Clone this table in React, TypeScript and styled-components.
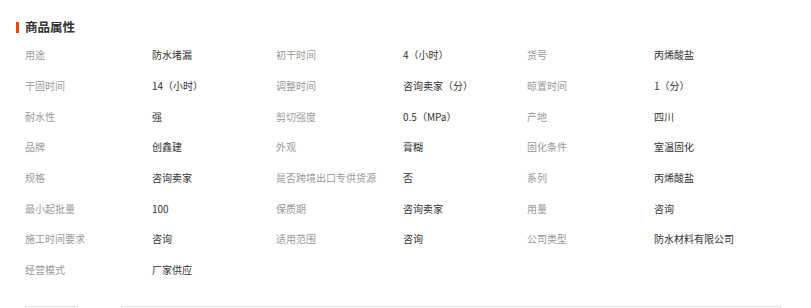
import React from "react";
import styled, { createGlobalStyle } from "styled-components";

const Global = createGlobalStyle`
  html, body { margin: 0; padding: 0; background: #fff; }
  body { font-family: "Noto Sans CJK SC", "Noto Sans", sans-serif; overflow: hidden; }
`;

const Page = styled.div`
  width: 811px;
  height: 308px;
  overflow: hidden;
  padding-top: 20px;
  box-sizing: border-box;
`;

const Header = styled.div`
  display: flex;
  align-items: center;
  gap: 6px;
  padding-left: 16px;
  height: 14px;
`;

const Bar = styled.span`
  width: 3px;
  height: 11px;
  background: #ff4200;
`;

const Title = styled.h2`
  margin: 0;
  font-size: 12.5px;
  font-weight: 700;
  color: #333;
  line-height: 14px;
`;

const Table = styled.div`
  margin: 6px 0 0 25px;
  width: 753px;
  display: grid;
  grid-template-columns: repeat(3, 127px 124px);
  grid-auto-rows: 30.7px;
  align-items: center;
`;

const Cell = styled.div<{ $label?: boolean }>`
  font-size: 10px;
  line-height: 12px;
  color: ${(p) => (p.$label ? "#999" : "#333")};
  white-space: nowrap;
`;

const Footer = styled.div`
  display: flex;
  gap: 43px;
  margin: 20px 0 0 25px;
`;

const Box = styled.div<{ $w: number }>`
  width: ${(p) => p.$w}px;
  height: 30px;
  border: 1px solid #e3e3e3;
  box-sizing: border-box;
`;

const rows: [string, string][][] = [
  [["用途", "防水堵漏"], ["初干时间", "4（小时）"], ["货号", "丙烯酸盐"]],
  [["干固时间", "14（小时）"], ["调整时间", "咨询卖家（分）"], ["晾置时间", "1（分）"]],
  [["耐水性", "强"], ["剪切强度", "0.5（MPa）"], ["产地", "四川"]],
  [["品牌", "创鑫建"], ["外观", "膏糊"], ["固化条件", "室温固化"]],
  [["规格", "咨询卖家"], ["是否跨境出口专供货源", "否"], ["系列", "丙烯酸盐"]],
  [["最小起批量", "100"], ["保质期", "咨询卖家"], ["用量", "咨询"]],
  [["施工时间要求", "咨询"], ["适用范围", "咨询"], ["公司类型", "防水材料有限公司"]],
  [["经营模式", "厂家供应"]],
];

export default function App() {
  return (
    <Page>
      <Global />
      <Header>
        <Bar />
        <Title>商品属性</Title>
      </Header>
      <Table>
        {rows.map((row, i) =>
          [0, 1, 2].map((j) => {
            const item = row[j];
            return (
              <React.Fragment key={`${i}-${j}`}>
                <Cell $label>{item ? item[0] : ""}</Cell>
                <Cell>{item ? item[1] : ""}</Cell>
              </React.Fragment>
            );
          })
        )}
      </Table>
      <Footer>
        <Box $w={53} />
        <Box $w={660} />
      </Footer>
    </Page>
  );
}
